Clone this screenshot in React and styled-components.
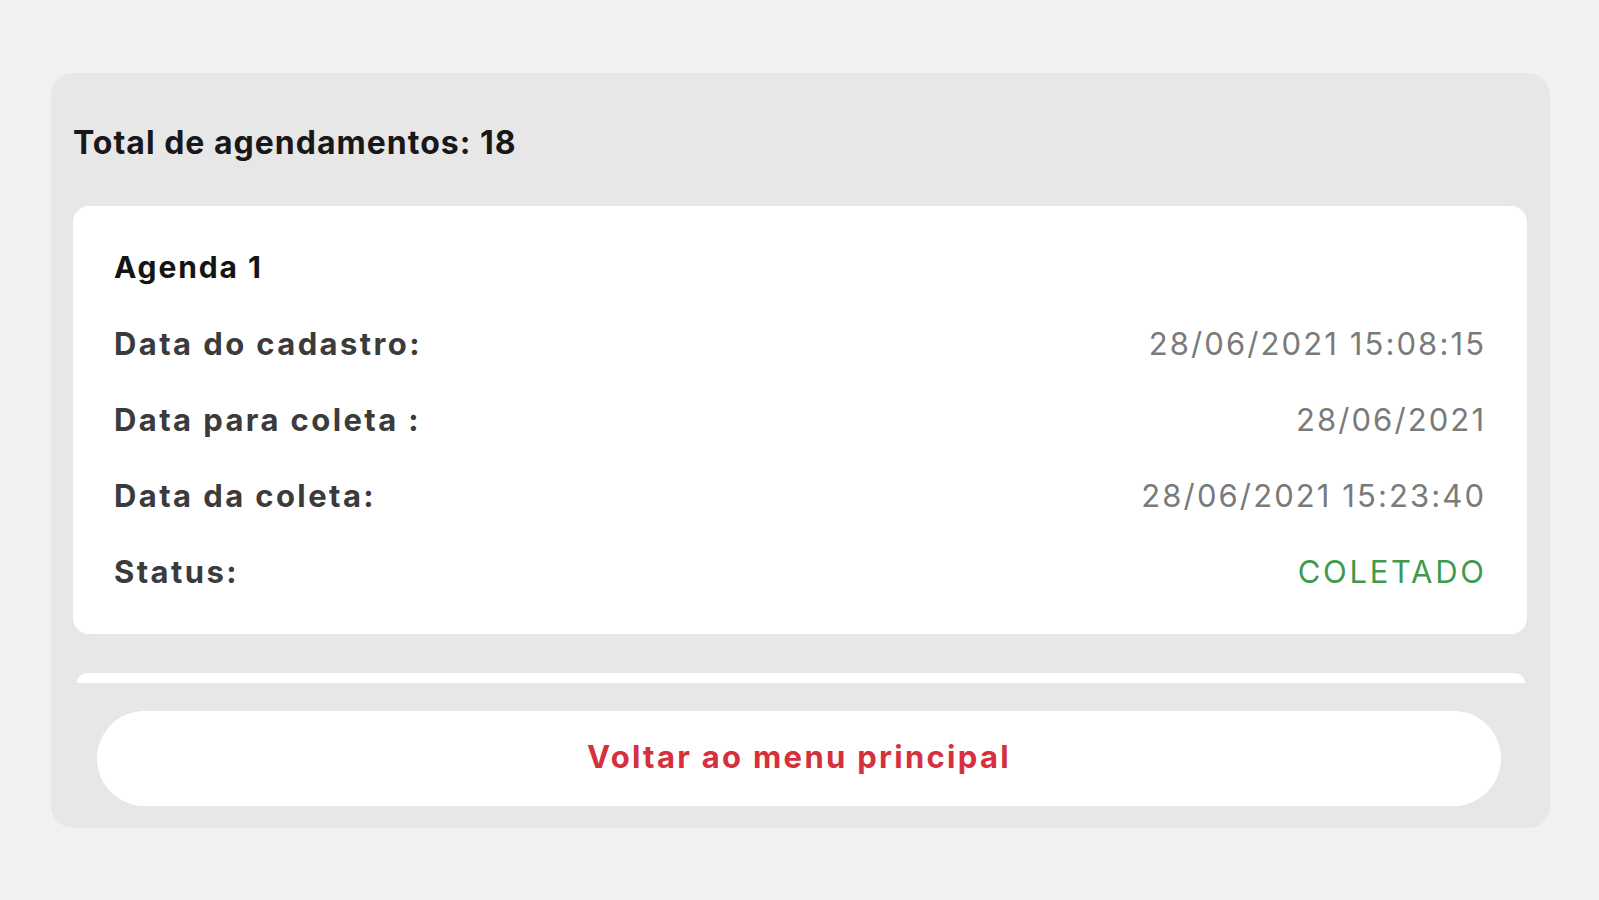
import React from "react";
import styled, { createGlobalStyle } from "styled-components";

const GlobalStyle = createGlobalStyle`
  html, body {
    margin: 0;
    padding: 0;
    background-color: #f1f1f1;
    font-family: Inter, "Liberation Sans", Arial, sans-serif;
  }
`;

const Page = styled.div`
  min-height: 900px;
  box-sizing: border-box;
  padding: 73px 49px 0 51px;
`;

const Panel = styled.div`
  background-color: #e8e7e8;
  border-radius: 22px;
  padding: 0 23px 22px 22px;
  display: flex;
  flex-direction: column;
`;

const Title = styled.h1`
  margin: 0;
  height: 133px;
  box-sizing: border-box;
  padding-top: 5px;
  display: flex;
  align-items: center;
  font-size: 32px;
  font-weight: 700;
  letter-spacing: 1px;
  color: #181818;
`;

const List = styled.div`
  height: 477px;
  display: flex;
  flex-direction: column;
  gap: 39px;
`;

const Card = styled.div`
  background-color: #ffffff;
  border-radius: 16px;
  padding: 23px 43px 25px 41px;
`;

const NextCardEdge = styled.div`
  height: 10px;
  margin: 0 2px 0 4px;
  background-color: #ffffff;
  border-radius: 16px 16px 0 0;
`;

const Line = styled.div`
  height: 76px;
  display: flex;
  align-items: center;
  justify-content: space-between;
`;

const CardTitle = styled.span`
  font-size: 30px;
  font-weight: 700;
  letter-spacing: 1.9px;
  color: #141414;
`;

const Label = styled.span`
  font-size: 31px;
  font-weight: 700;
  letter-spacing: 2.4px;
  color: #3b3b3b;
`;

const Value = styled.span`
  font-size: 31px;
  font-weight: 400;
  letter-spacing: ${(p) => p.$spacing || 2.1}px;
  margin-right: -${(p) => p.$spacing || 2.1}px;
  color: ${(p) => p.$color || "#7a7a7a"};
`;

const BackButton = styled.button`
  margin: 28px 26px 0 24px;
  height: 95px;
  padding: 0 0 5px;
  border: none;
  border-radius: 48px;
  background-color: #ffffff;
  font-family: inherit;
  font-size: 31px;
  font-weight: 700;
  letter-spacing: 2.3px;
  color: #d5303e;
  cursor: pointer;
`;

const agenda = {
  id: 1,
  cadastro: "28/06/2021 15:08:15",
  paraColeta: "28/06/2021",
  coleta: "28/06/2021 15:23:40",
  status: "COLETADO",
};

function AgendaCard({ item }) {
  return (
    <Card>
      <Line>
        <CardTitle>Agenda {item.id}</CardTitle>
      </Line>
      <Line>
        <Label>Data do cadastro:</Label>
        <Value>{item.cadastro}</Value>
      </Line>
      <Line>
        <Label>Data para coleta :</Label>
        <Value>{item.paraColeta}</Value>
      </Line>
      <Line>
        <Label>Data da coleta:</Label>
        <Value>{item.coleta}</Value>
      </Line>
      <Line>
        <Label>Status:</Label>
        <Value $color="#3f9a4e" $spacing={2.7}>
          {item.status}
        </Value>
      </Line>
    </Card>
  );
}

export default function App() {
  return (
    <>
      <GlobalStyle />
      <Page>
        <Panel>
          <Title>Total de agendamentos: 18</Title>
          <List>
            <AgendaCard item={agenda} />
            <NextCardEdge />
          </List>
          <BackButton>Voltar ao menu principal</BackButton>
        </Panel>
      </Page>
    </>
  );
}
